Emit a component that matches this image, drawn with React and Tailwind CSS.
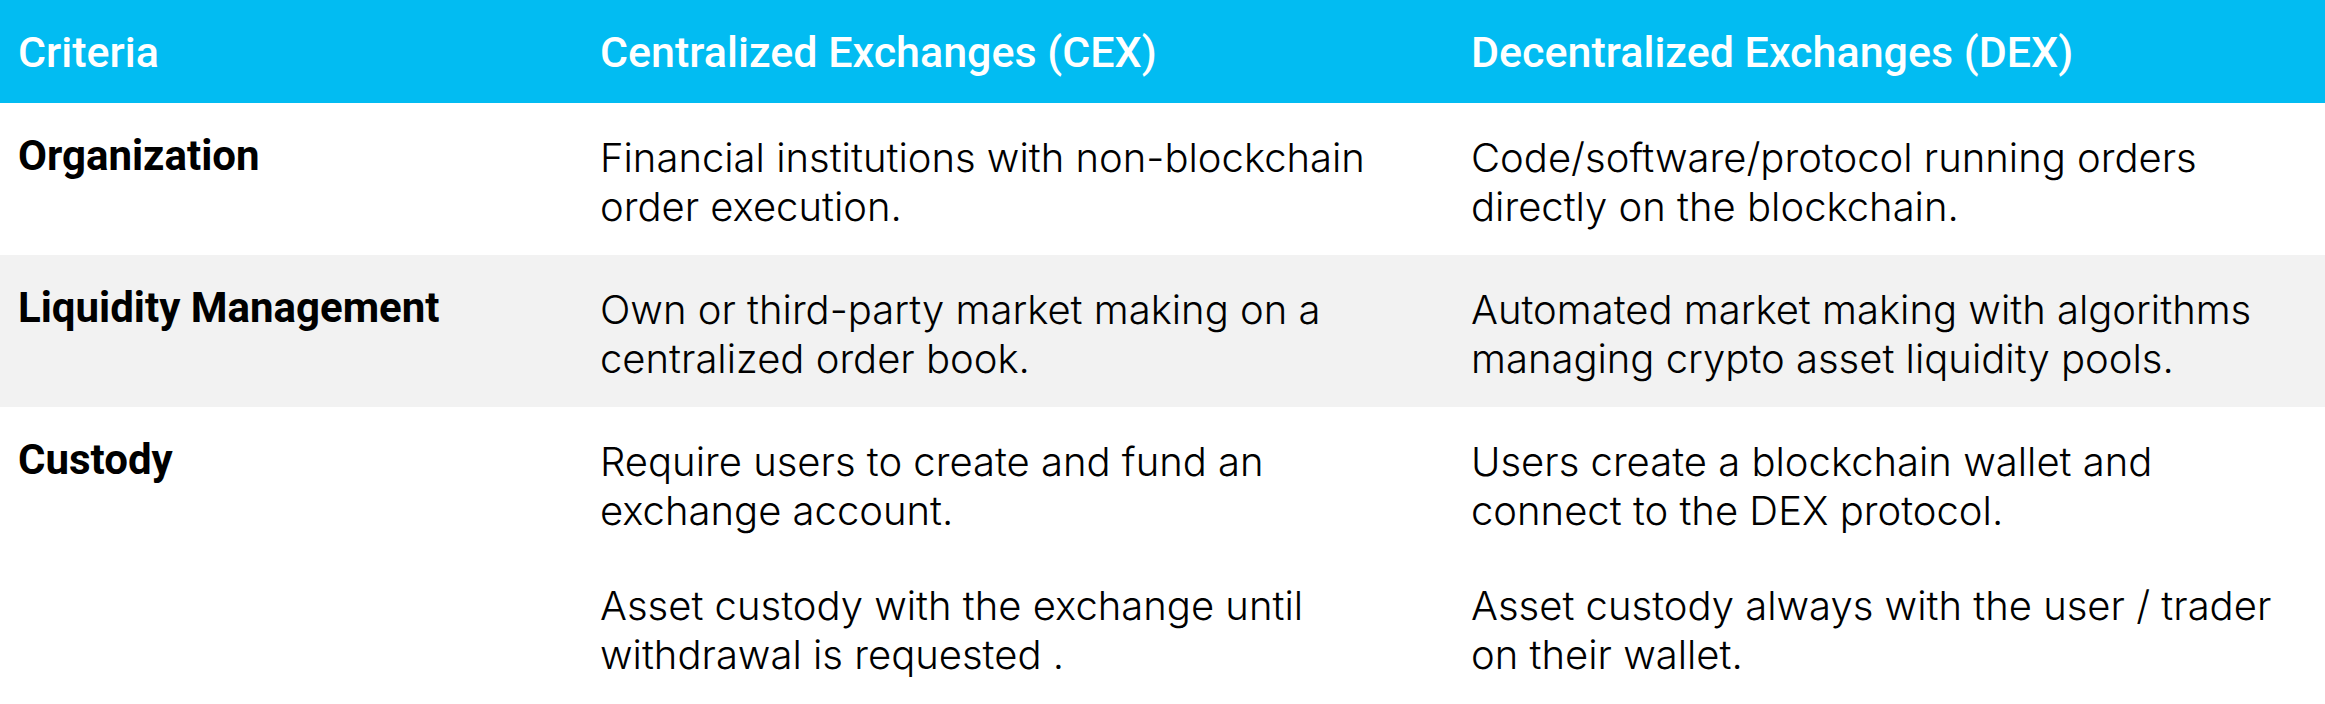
import React from 'react';

const rows = [
    {
        label: 'Organization',
        cex: [['Financial institutions with non-blockchain', 'order execution.']],
        dex: [['Code/software/protocol running orders', 'directly on the blockchain.']],
    },
    {
        label: 'Liquidity Management',
        cex: [['Own or third-party market making on a', 'centralized order book.']],
        dex: [['Automated market making with algorithms', 'managing crypto asset liquidity pools.']],
        shaded: true,
    },
    {
        label: 'Custody',
        cex: [
            ['Require users to create and fund an', 'exchange account.'],
            ['Asset custody with the exchange until', 'withdrawal is requested .'],
        ],
        dex: [
            ['Users create a blockchain wallet and', 'connect to the DEX protocol.'],
            ['Asset custody always with the user / trader', 'on their wallet.'],
        ],
    },
];

const Cell = ({ paras }) => (
    <div className="pl-[18px] pr-[18px] pt-[30px] pb-[24px] font-['Inter',_sans-serif] text-[40px] leading-[49px] font-light text-black">
        {paras.map(([a, b], i) => (
            <p key={i} className={`whitespace-nowrap ${i > 0 ? 'mt-[46px]' : ''}`}>
                {a}<br />{b}
            </p>
        ))}
    </div>
);

export default function App() {
    return (
        <div className="w-[2325px] bg-white font-['Roboto',_'Noto_Sans',_sans-serif]">
            <div className="grid grid-cols-[582px_871px_1fr] h-[103px] bg-[#02bcf2] text-white text-[43px] leading-[49px] font-medium">
                <div className="pl-[18px] pt-[28px]">Criteria</div>
                <div className="pl-[18px] pt-[28px]">Centralized Exchanges (CEX)</div>
                <div className="pl-[18px] pt-[28px]">Decentralized Exchanges (DEX)</div>
            </div>
            {rows.map((r) => (
                <div key={r.label} className={`grid grid-cols-[582px_871px_1fr] ${r.shaded ? 'bg-[#f2f2f2]' : 'bg-white'}`}>
                    <div className="pl-[18px] pt-[28px] text-[42px] leading-[49px] font-bold text-black">{r.label}</div>
                    <Cell paras={r.cex} />
                    <Cell paras={r.dex} />
                </div>
            ))}
        </div>
    );
}
